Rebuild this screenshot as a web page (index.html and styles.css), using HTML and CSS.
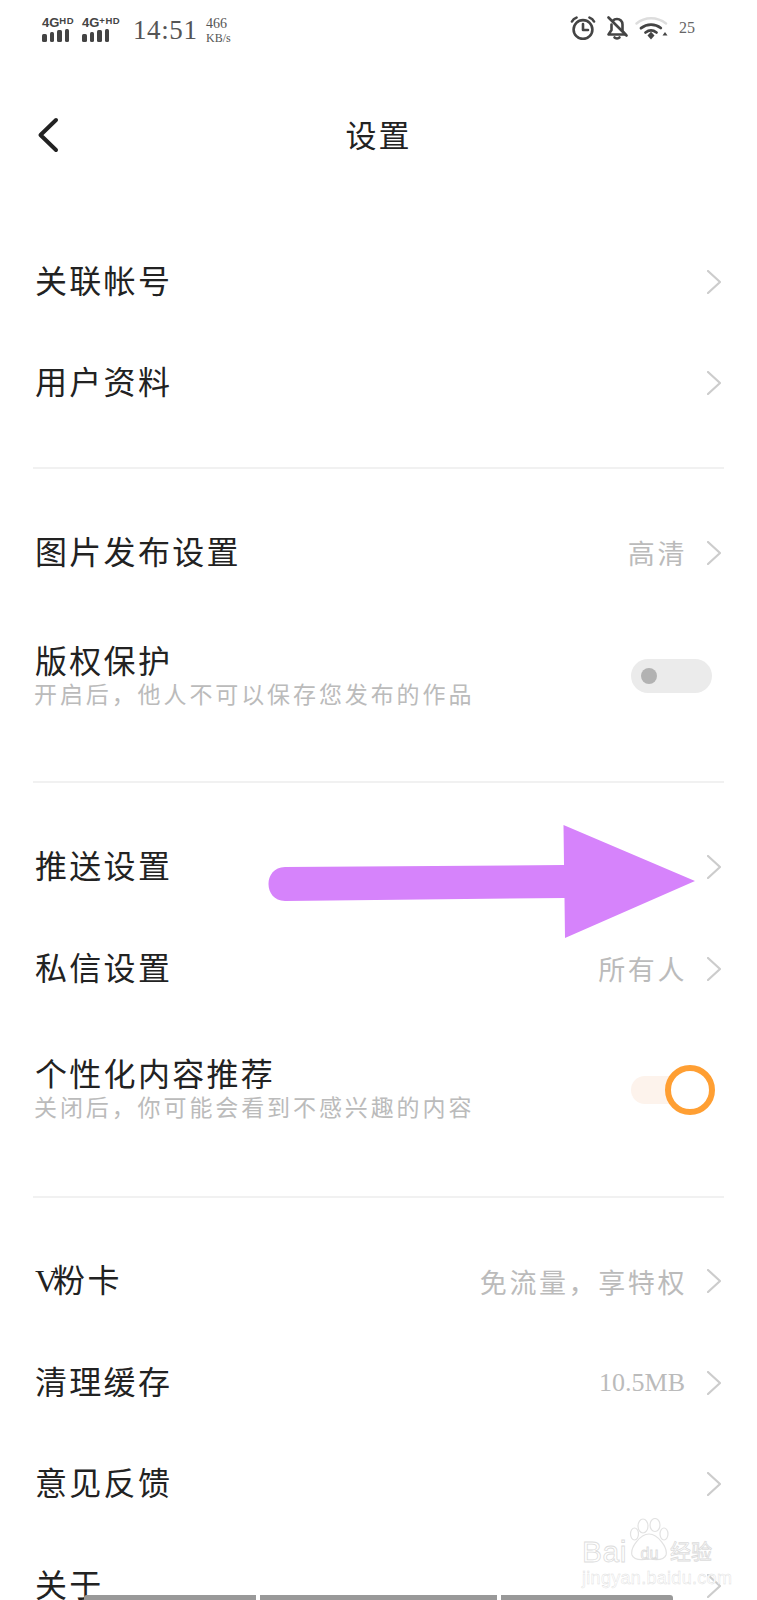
FILE: index.html
```html
<!DOCTYPE html>
<html lang="zh-CN">

<head>
    <meta charset="UTF-8">
    <meta name="viewport" content="width=device-width, initial-scale=1.0">
    <title>设置</title>
    <link rel="stylesheet" href="styles.css">
</head>

<body>
    <div class="page">
        <!-- Status bar -->
        <div class="status">
            <div class="signal">
                <span class="signal-label">4G<small>HD</small></span>
                <span class="bars"><i class="b1"></i><i class="b2"></i><i class="b3"></i><i class="b4"></i></span>
            </div>
            <div class="signal signal-wide">
                <span class="signal-label">4G<small>+HD</small></span>
                <span class="bars"><i class="b1"></i><i class="b2"></i><i class="b3"></i><i class="b4"></i></span>
            </div>
            <div class="time">14:51</div>
            <div class="speed"><span>466</span><span class="speed-unit">KB/s</span></div>
            <div class="status-right">
                <svg class="icon-alarm" width="26" height="24" viewBox="0 0 26 24" fill="none" stroke="#444" stroke-width="2.6" stroke-linecap="round" stroke-linejoin="round">
                    <circle cx="13" cy="13.5" r="9.4"/>
                    <path d="M13 8v6h5"/>
                    <path d="M2 5.5C3 3.5 4.5 2.4 6.5 1.6M24 5.5C23 3.5 21.5 2.4 19.5 1.6"/>
                </svg>
                <svg class="icon-bell" width="24" height="24" viewBox="0 0 24 24" fill="none" stroke="#444" stroke-width="2.6" stroke-linecap="round" stroke-linejoin="round">
                    <path d="M6.5 8.5V14L3.5 18.5H20.5L17.5 15V8.5C17.5 5 15 3 12 3C10 3 8.8 3.6 7.8 4.8"/>
                    <path d="M9.5 21.5C10.5 22.8 13.5 22.8 14.5 21.5"/>
                    <path d="M3.5 1.5L21.5 19.5"/>
                </svg>
                <svg class="icon-wifi" width="34" height="24" viewBox="0 0 34 24" fill="none" stroke-linecap="round">
                    <path d="M1.5 7.5C10 0.5 22 0.5 31 7.5" stroke="#ddd" stroke-width="2.4"/>
                    <path d="M6 12.2C12 7.4 20 7.4 25.8 12" stroke="#444" stroke-width="2.8"/>
                    <path d="M10.5 16.5C14 13.8 18 13.8 21.5 16.5" stroke="#444" stroke-width="2.8"/>
                    <path d="M12.5 19.5L16 15.8L19.5 19.5L16 23.5Z" fill="#444"/>
                    <path d="M27.5 19.5L30 16L32.5 19.5Z" fill="#444"/>
                </svg>
                <div class="battery">25</div>
            </div>
        </div>

        <!-- Title bar -->
        <div class="nav">
            <svg class="back" width="22" height="36" viewBox="0 0 22 36" fill="none" stroke="#222" stroke-width="4" stroke-linecap="round" stroke-linejoin="round">
                <path d="M19 3L3.500 18L19 33"/>
            </svg>
            <div class="nav-title">设置</div>
        </div>

        <!-- Settings list -->
        <div class="group group-account">
            <div class="row">
                <div class="row-text"><div class="row-title">关联帐号</div></div>
                <svg class="chevron" width="14" height="24" viewBox="0 0 14 24"><path d="M1 1L13 12L1 23"/></svg>
            </div>
            <div class="row">
                <div class="row-text"><div class="row-title">用户资料</div></div>
                <svg class="chevron" width="14" height="24" viewBox="0 0 14 24"><path d="M1 1L13 12L1 23"/></svg>
            </div>
        </div>

        <div class="group group-publish">
            <div class="row">
                <div class="row-text"><div class="row-title">图片发布设置</div></div>
                <div class="row-value">高清</div>
                <svg class="chevron" width="14" height="24" viewBox="0 0 14 24"><path d="M1 1L13 12L1 23"/></svg>
            </div>
            <div class="row row-tall">
                <div class="row-text">
                    <div class="row-title">版权保护</div>
                    <div class="row-sub">开启后，他人不可以保存您发布的作品</div>
                </div>
                <div class="toggle toggle-off"><span class="knob-off"></span></div>
            </div>
        </div>

        <div class="group group-privacy">
            <div class="row">
                <div class="row-text"><div class="row-title">推送设置</div></div>
                <svg class="chevron" width="14" height="24" viewBox="0 0 14 24"><path d="M1 1L13 12L1 23"/></svg>
            </div>
            <div class="row">
                <div class="row-text"><div class="row-title">私信设置</div></div>
                <div class="row-value">所有人</div>
                <svg class="chevron" width="14" height="24" viewBox="0 0 14 24"><path d="M1 1L13 12L1 23"/></svg>
            </div>
            <div class="row row-tall">
                <div class="row-text">
                    <div class="row-title">个性化内容推荐</div>
                    <div class="row-sub">关闭后，你可能会看到不感兴趣的内容</div>
                </div>
                <div class="toggle toggle-on"><span class="knob-on"></span></div>
            </div>
        </div>

        <div class="group group-misc">
            <div class="row">
                <div class="row-text"><div class="row-title"><span class="latin">V</span>粉卡</div></div>
                <div class="row-value">免流量，享特权</div>
                <svg class="chevron" width="14" height="24" viewBox="0 0 14 24"><path d="M1 1L13 12L1 23"/></svg>
            </div>
            <div class="row">
                <div class="row-text"><div class="row-title">清理缓存</div></div>
                <div class="row-value row-value-num">10.5MB</div>
                <svg class="chevron" width="14" height="24" viewBox="0 0 14 24"><path d="M1 1L13 12L1 23"/></svg>
            </div>
            <div class="row">
                <div class="row-text"><div class="row-title">意见反馈</div></div>
                <svg class="chevron" width="14" height="24" viewBox="0 0 14 24"><path d="M1 1L13 12L1 23"/></svg>
            </div>
            <div class="row">
                <div class="row-text"><div class="row-title">关于</div></div>
                <svg class="chevron" width="14" height="24" viewBox="0 0 14 24"><path d="M1 1L13 12L1 23"/></svg>
            </div>
        </div>

        <!-- Annotation arrow -->
        <svg class="arrow" width="440" height="120" viewBox="0 0 440 120">
            <path d="M18 42L297 40L296.500 0L428 56L298 113L297.500 73L18 76C-4 76 -4 42 18 42Z" fill="#d683fb"/>
        </svg>

        <!-- Watermark -->
        <div class="watermark">
            <svg class="paw" width="42" height="44" viewBox="0 0 42 44" fill="#fff" stroke="#e2e2e2" stroke-width="1.2">
                <ellipse cx="15" cy="8" rx="5" ry="7"/>
                <ellipse cx="27" cy="7" rx="5" ry="6.500"/>
                <ellipse cx="6.500" cy="16" rx="4" ry="6"/>
                <ellipse cx="36" cy="16" rx="4" ry="6"/>
                <path d="M21 16C30 16 40 30 38 37C36 43 27 42 21 41C15 42 6 43 4 37C2 30 12 16 21 16Z"/>
            </svg>
            <div class="wm-logo"><span class="wm-bai">Bai</span><span class="wm-du">du</span><span class="wm-cn">经验</span></div>
            <div class="wm-url">jingyan.baidu.com</div>
        </div>

        <!-- Bottom page indicator -->
        <div class="pager">
            <span class="seg seg-a"></span>
            <span class="seg seg-b"></span>
            <span class="seg seg-c"></span>
        </div>
    </div>
</body>

</html>
```

FILE: styles.css
```css
/* General Styles */
* {
    margin: 0;
    padding: 0;
    box-sizing: border-box;
}

body {
    font-family: "Liberation Serif", "Noto Sans CJK SC", serif;
    background: #fff;
    color: #222;
}

.page {
    position: relative;
    width: 757px;
    height: 1600px;
    overflow: hidden;
    background: #fff;
}

/* Status bar */
.status {
    height: 56px;
    padding: 14px 0 0 42px;
    display: flex;
    align-items: flex-start;
    color: #555;
}

.signal {
    width: 40px;
    display: flex;
    flex-direction: column;
}

.signal-wide {
    width: 51px;
}

.signal-label {
    font-family: "Liberation Sans", sans-serif;
    font-size: 13px;
    font-weight: bold;
    line-height: 13px;
    color: #444;
}

.signal-label small {
    font-size: 9.5px;
    letter-spacing: 0.5px;
    vertical-align: 3px;
}

.bars {
    display: flex;
    align-items: flex-end;
    gap: 3px;
    height: 13px;
}

.bars i {
    display: block;
    width: 4.5px;
    background: #444;
    border-radius: 1.5px;
}

.bars .b1 { height: 8px; }
.bars .b2 { height: 10px; }
.bars .b3 { height: 12px; }
.bars .b4 { height: 13px; }

.time {
    font-size: 27px;
    line-height: 30px;
    letter-spacing: 0.6px;
    margin-top: 1px;
    width: 73px;
}

.speed {
    display: flex;
    flex-direction: column;
    font-size: 14px;
    line-height: 14px;
    margin-top: 3px;
}

.speed-unit {
    font-size: 12px;
}

.status-right {
    margin-left: auto;
    margin-right: 62px;
    display: flex;
    align-items: center;
    height: 28px;
}

.icon-alarm {
    margin-right: 9px;
}

.icon-bell {
    margin-right: 6px;
}

.icon-wifi {
    margin-right: 10px;
}

.battery {
    font-size: 16px;
    color: #666;
}

/* Title bar */
.nav {
    position: relative;
    height: 154px;
    display: flex;
    align-items: center;
    justify-content: center;
}

.back {
    position: absolute;
    left: 37px;
    top: 61px;
}

.nav-title {
    font-size: 31px;
    letter-spacing: 2px;
    color: #222;
}

/* Settings list */
.group {
    margin: 0 33px;
    border-bottom: 2px solid #f1f1f1;
}

.group-account {
    padding: 21px 0 33px;
}

.group-publish {
    padding: 33px 0 31px;
}

.group-privacy {
    padding: 34px 0 36px;
}

.group-misc {
    padding: 33px 0 0;
    border-bottom: none;
}

.row {
    height: 101.5px;
    display: flex;
    align-items: center;
    padding: 0 3px 0 2px;
}

.row-tall {
    height: 146px;
}

.group-privacy .row-tall {
    height: 140px;
}

.row-text {
    flex: 1;
}

.row-title {
    font-size: 32px;
    line-height: 36px;
    letter-spacing: 2.3px;
    color: #222;
}

.latin {
    letter-spacing: -5px;
}

.row-sub {
    font-size: 23px;
    line-height: 28px;
    margin-top: 2px;
    margin-left: -1px;
    letter-spacing: 2.9px;
    color: #bbb;
}

.row-value {
    font-size: 27px;
    letter-spacing: 2.6px;
    color: #bbb;
    margin-right: 20px;
}

.row-value-num {
    font-size: 26px;
    letter-spacing: 0;
    margin-right: 22px;
}

.chevron {
    fill: none;
    stroke: #ccc;
    stroke-width: 2.2;
    stroke-linecap: round;
    stroke-linejoin: round;
}

/* Switches */
.toggle {
    position: relative;
}

.toggle-off {
    width: 81px;
    height: 34px;
    margin: -2px 9px 0 0;
    display: flex;
    align-items: center;
    padding-left: 10px;
    background: #ebebeb;
    border-radius: 17px;
}

.knob-off {
    width: 16px;
    height: 16px;
    background: #b2b2b2;
    border-radius: 50%;
}

.toggle-on {
    width: 76px;
    height: 28px;
    margin-right: 14px;
    background: #fdf3ec;
    border-radius: 14px;
}

.knob-on {
    position: absolute;
    right: -8px;
    top: -11px;
    width: 50px;
    height: 50px;
    background: #fff;
    border: 6px solid #ff9f33;
    border-radius: 50%;
}

/* Annotation arrow */
.arrow {
    position: absolute;
    left: 267px;
    top: 825px;
}

/* Watermark */
.watermark {
    position: absolute;
    left: 582px;
    top: 1518px;
    width: 140px;
    color: #fff;
    -webkit-text-stroke: 0.8px #dcdcdc;
    font-family: "Liberation Sans", "Noto Sans CJK SC", sans-serif;
}

.paw {
    position: absolute;
    left: 46px;
    top: 0;
}

.wm-logo {
    position: relative;
    margin-top: 17px;
    display: flex;
    align-items: center;
    line-height: 30px;
}

.wm-bai {
    width: 47px;
    font-size: 30px;
    letter-spacing: 0.5px;
}

.wm-du {
    width: 41px;
    text-align: center;
    font-size: 16px;
    margin-top: 4px;
}

.wm-cn {
    font-size: 21px;
}

.wm-url {
    font-size: 18px;
    line-height: 18px;
    letter-spacing: 0.3px;
    white-space: nowrap;
    -webkit-text-stroke: 0.4px #dcdcdc;
}

/* Bottom page indicator */
.pager {
    position: absolute;
    left: 84px;
    bottom: 0;
    display: flex;
    gap: 4px;
    height: 5px;
}

.seg {
    display: block;
    background: #999;
}

.seg-a { width: 172px; border-radius: 3px 0 0 0; }
.seg-b { width: 237px; }
.seg-c { width: 172px; border-radius: 0 3px 0 0; }
```
